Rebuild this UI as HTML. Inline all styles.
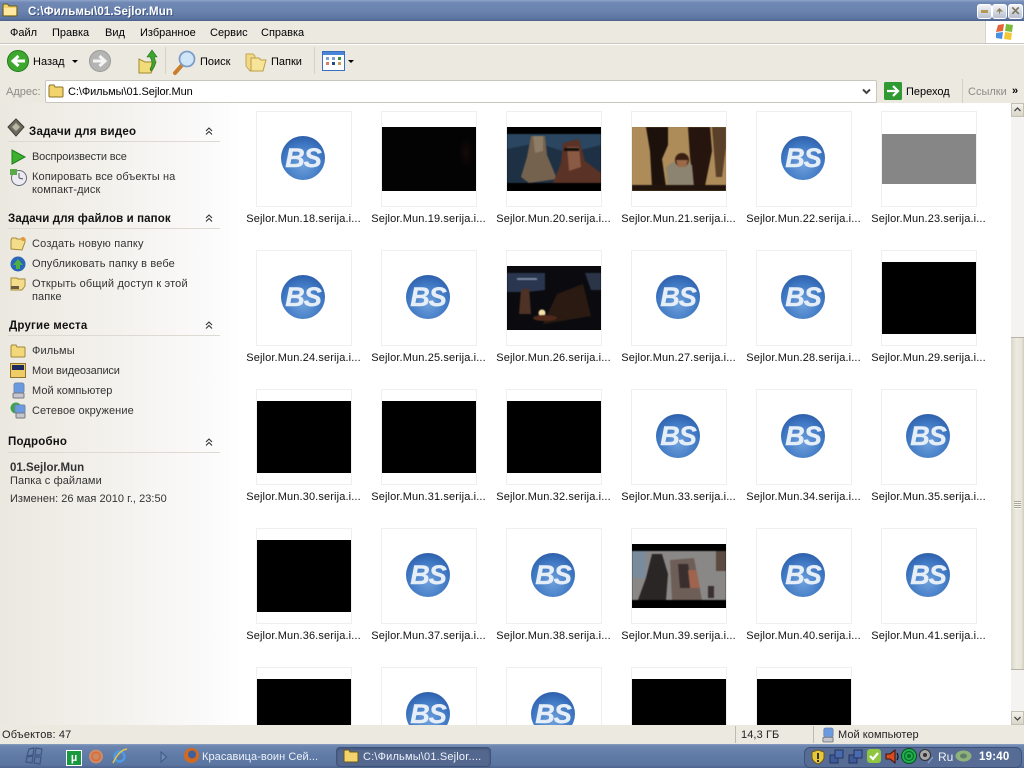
<!DOCTYPE html>
<html><head><meta charset="utf-8">
<style>
html,body{margin:0;padding:0;width:1024px;height:768px;overflow:hidden;background:#ece9e0}
body{font-family:"Liberation Sans","DejaVu Sans",sans-serif;font-size:11px;color:#000;position:relative}
.a,.t{position:absolute}
.t{white-space:nowrap;line-height:13px;margin-top:1px}
.t.g,.t.h{margin-top:2px}
svg{position:absolute;overflow:visible}
#title{left:0;top:0;width:1024px;height:21px;background:linear-gradient(#8ea5c9 0,#7089b4 12%,#6a83ae 55%,#5a73a0 90%,#4a5f88 100%)}
#menu{left:0;top:21px;width:1024px;height:22px;background:#ece9e1;border-bottom:1px solid #c9c6bd}
#tool{left:0;top:44px;width:1024px;height:33px;background:#ece9e1;border-bottom:1px solid #d2cfc6;border-top:1px solid #fff}
#addr{left:0;top:78px;width:1024px;height:25px;background:#ece9e1}
#side{left:0;top:103px;width:241px;height:622px;background:linear-gradient(90deg,#ebe8e0,#f3f1ec 45%,#fbfafa 85%,#fff)}
#view{left:241px;top:103px;width:770px;height:622px;background:#fff;overflow:hidden}
.c{position:absolute;width:94px;height:94px;border:1px solid #efefef;background:#fff}
.c .l{position:absolute;left:-16px;top:101px;width:125px;text-align:center;white-space:nowrap;line-height:13px;letter-spacing:.13px;color:#111}
.k{position:absolute;left:0;width:94px;height:72px;top:11px;background:#000}
.k svg{filter:blur(.6px)}
.b{position:absolute;left:24px;top:24px;width:44px;height:44px;border-radius:50%;background:radial-gradient(circle at 50% 65%,#6ea0dc 0,#3f78c3 55%,#2a5aa6 85%,#24508f 100%);color:#e6eef8;font:italic bold 27px/44px "Liberation Sans",sans-serif;text-align:center;letter-spacing:-1px;overflow:hidden;-webkit-text-stroke:.4px #e6eef8}
.h{font-weight:bold;left:8px;color:#111}
.r{position:absolute;left:8px;width:212px;height:1px;background:#dddad3}
.g{color:#333;left:32px;letter-spacing:.1px}
.sb{position:absolute;left:1011px;background:#f5f3f1;width:13px}
#task{left:0;top:744px;width:1024px;height:24px;background:linear-gradient(#8aa0c2 0,#6c86b0 8%,#5f7aa6 50%,#5c76a2 85%,#4c6590 100%)}
.w{color:#eef2f8}
</style></head><body>

<div class="a" id="title"></div>
<svg style="left:2px;top:2px" width="16" height="15" viewBox="0 0 16 15"><path d="M1 4 L1 13 Q1 14 2 14 H14 Q15 14 15 13 V5 Q15 4 14 4 H7 L5.500 2 H2 Q1 2 1 4Z" fill="#f3d36b" stroke="#6a5a1a"/><path d="M2 6 H14 V13 H2Z" fill="#ffe9a0"/></svg>
<div class="t" style="left:28px;top:5px;color:#fff;font-weight:bold;font-size:11.500px;letter-spacing:.12px;text-shadow:1px 1px 0 #3f5580">C:\Фильмы\01.Sejlor.Mun</div>
<div class="a" style="left:977px;top:4px;width:13px;height:13px;background:linear-gradient(#f4f4f8,#b8bfd0);border:1px solid #fff;border-radius:3px"><div class="a" style="left:3px;top:5px;width:7px;height:3px;background:#b49a50"></div></div>
<div class="a" style="left:992px;top:4px;width:13px;height:13px;background:linear-gradient(#f4f4f8,#b8bfd0);border:1px solid #fff;border-radius:3px"><div class="a" style="left:3px;top:3px;width:7px;height:7px;background:#8a8460;clip-path:polygon(50% 0,100% 50%,60% 50%,50% 100%,40% 50%,0 50%)"></div></div>
<div class="a" style="left:1008px;top:4px;width:13px;height:13px;background:linear-gradient(#f4f4f8,#b8bfd0);border:1px solid #fff;border-radius:3px;color:#7a775f;font:bold 12px/13px 'Liberation Sans';text-align:center">✕</div>

<div class="a" id="menu"></div>
<div class="t" style="left:10px;top:26px">Файл</div>
<div class="t" style="left:52px;top:26px">Правка</div>
<div class="t" style="left:105px;top:26px">Вид</div>
<div class="t" style="left:140px;top:26px">Избранное</div>
<div class="t" style="left:210px;top:26px">Сервис</div>
<div class="t" style="left:261px;top:26px">Справка</div>
<div class="a" style="left:985px;top:21px;width:39px;height:22px;background:#fff;border-left:1px solid #d8d5cc"></div>
<svg style="left:995px;top:23px" width="20" height="18" viewBox="0 0 20 18"><path d="M3 2 L9 1 L8 8 L1 9Z" fill="#e4643a"/><path d="M11 1 L18 2 L17 9 L10 8Z" fill="#7cbb3c"/><path d="M1 10 L8 9 L7 16 L1 15Z" fill="#4a8fe0"/><path d="M10 9 L17 10 L16 17 L9 16Z" fill="#f5c734"/></svg>

<div class="a" id="tool"></div>
<svg style="left:7px;top:50px" width="22" height="22" viewBox="0 0 22 22"><circle cx="11" cy="11" r="10.500" fill="#3ea82e" stroke="#1f7a1c"/><path d="M18 11 H7 M11.500 6 L6 11 L11.500 16" fill="none" stroke="#fff" stroke-width="3"/></svg>
<div class="t" style="left:33px;top:55px">Назад</div>
<div class="a" style="left:72px;top:60px;width:0;height:0;border:3px solid transparent;border-top:3px solid #000;border-bottom:0"></div>
<svg style="left:89px;top:50px" width="22" height="22" viewBox="0 0 22 22"><circle cx="11" cy="11" r="10.500" fill="#b4b4b2" stroke="#999"/><path d="M4 11 H15 M10.500 6 L16 11 L10.500 16" fill="none" stroke="#f4f4f4" stroke-width="3"/></svg>
<svg style="left:137px;top:49px" width="22" height="26" viewBox="0 0 22 26"><path d="M2 10 L2 24 L14 24 L19 13 L8 13 Z" fill="#f2dc7a" stroke="#a08b2c"/><path d="M13 20 Q17 14 13 8 H10 L15 1 L20 8 H17 Q21 15 14 22Z" fill="#3da52e" stroke="#1d6e1a" stroke-width=".6"/></svg>
<div class="a" style="left:165px;top:47px;width:1px;height:27px;background:#d5d2c9"></div>
<svg style="left:172px;top:49px" width="26" height="26" viewBox="0 0 26 26"><path d="M3 24 L11 15" stroke="#c8802f" stroke-width="4" stroke-linecap="round"/><circle cx="15" cy="10" r="7.500" fill="#cfe6f8" stroke="#7f9ec6" stroke-width="1.800"/></svg>
<div class="t" style="left:200px;top:55px">Поиск</div>
<svg style="left:245px;top:51px" width="24" height="22" viewBox="0 0 24 22"><path d="M1 3 H8 L10 5 V14 L5 20 L1 15Z" fill="#f1d98a" stroke="#c3a850"/><path d="M6 7 H14 L16 9 H21 L18 20 H6Z" fill="#f6e498" stroke="#bb9f47"/></svg>
<div class="t" style="left:271px;top:55px">Папки</div>
<div class="a" style="left:314px;top:47px;width:1px;height:27px;background:#d5d2c9"></div>
<svg style="left:322px;top:51px" width="23" height="21" viewBox="0 0 23 21"><rect x=".5" y=".5" width="22" height="19" fill="#fff" stroke="#3a6fc0"/><rect x="1" y="1" width="21" height="3" fill="#4a86d8"/><rect x="4" y="6" width="3" height="3" fill="#7a9fd0"/><rect x="10" y="6" width="3" height="3" fill="#7a9fd0"/><rect x="16" y="6" width="3" height="3" fill="#3f8a4a"/><rect x="4" y="11" width="3" height="3" fill="#d88060"/><rect x="10" y="11" width="3" height="3" fill="#2a4a80"/><rect x="16" y="11" width="3" height="3" fill="#c8a050"/></svg>
<div class="a" style="left:348px;top:60px;width:0;height:0;border:3px solid transparent;border-top:3px solid #000;border-bottom:0"></div>

<div class="a" id="addr"></div>
<div class="t" style="left:6px;top:85px;color:#8d8b83">Адрес:</div>
<div class="a" style="left:45px;top:80px;width:830px;height:21px;background:#fff;border:1px solid #c9c6be;border-radius:2px"></div>
<svg style="left:48px;top:84px" width="16" height="14" viewBox="0 0 16 14"><path d="M1 3 V12 Q1 13 2 13 H14 Q15 13 15 12 V4 Q15 3 14 3 H7 L6 1 H2 Q1 1 1 3Z" fill="#f3d36b" stroke="#8a7424"/></svg>
<div class="t" style="left:68px;top:85px;letter-spacing:-.08px">C:\Фильмы\01.Sejlor.Mun</div>
<svg style="left:861px;top:88px" width="11" height="8" viewBox="0 0 11 8"><path d="M2 1.500 L5.500 5 L9 1.500" fill="none" stroke="#444" stroke-width="2"/></svg>
<svg style="left:884px;top:82px" width="18" height="18" viewBox="0 0 18 18"><rect width="18" height="18" rx="1.500" fill="#2f9a32"/><path d="M3 9 H13 M9 4 L14 9 L9 14" fill="none" stroke="#fff" stroke-width="2.200"/></svg>
<div class="t" style="left:906px;top:85px">Переход</div>
<div class="a" style="left:962px;top:79px;width:1px;height:24px;background:#d2cfc6"></div>
<div class="t" style="left:968px;top:85px;color:#8d8b83">Ссылки</div>
<div class="t" style="left:1012px;top:84px;font-weight:bold;font-size:11px">»</div>

<div class="a" id="side"></div>
<!-- section 1 -->
<svg style="left:7px;top:118px" width="18" height="20" viewBox="0 0 18 20"><path d="M9 1 L17 9 L9 18 L1 9Z" fill="#6c6c60" stroke="#3c3c34"/><path d="M9 5 L13 9 L9 13 L5 9Z" fill="#b8b7a4"/></svg>
<div class="t h" style="left:29px;top:124px;font-size:11.500px;letter-spacing:.25px">Задачи для видео</div>
<svg style="left:204px;top:127px" width="10" height="8" viewBox="0 0 10 8"><path d="M2 4 L5 1 L8 4 M2 7.500 L5 4.500 L8 7.500" fill="none" stroke="#333" stroke-width="1.100"/></svg>
<div class="r" style="top:141px"></div>
<svg style="left:11px;top:149px" width="15" height="16" viewBox="0 0 15 16"><path d="M1 1 L14 8 L1 15Z" fill="#3db030" stroke="#1f7e1c"/></svg>
<div class="t g" style="top:149px;letter-spacing:-.15px">Воспроизвести все</div>
<svg style="left:9px;top:168px" width="18" height="18" viewBox="0 0 18 18"><circle cx="10" cy="10" r="7.500" fill="#eceaf2" stroke="#666a78"/><path d="M10 10 V5 M10 10 L14 11" stroke="#555" /><rect x="1" y="1" width="7" height="6" fill="#5aaa4a"/></svg>
<div class="t g" style="top:169px;line-height:13px">Копировать все объекты на</div>
<div class="t g" style="top:182px">компакт-диск</div>

<div class="t h" style="top:211px;font-size:11.500px;letter-spacing:.12px">Задачи для файлов и папок</div>
<svg style="left:204px;top:214px" width="10" height="8" viewBox="0 0 10 8"><path d="M2 4 L5 1 L8 4 M2 7.500 L5 4.500 L8 7.500" fill="none" stroke="#333" stroke-width="1.100"/></svg>
<div class="r" style="top:228px"></div>
<svg style="left:10px;top:236px" width="16" height="15" viewBox="0 0 16 15"><path d="M1 4 V13 L12 14 L15 6 V3 H7 L6 2 H2Z" fill="#f3dd8a" stroke="#a68a38"/><circle cx="13" cy="3" r="2" fill="#e8963a"/></svg>
<div class="t g" style="top:236px;letter-spacing:.2px">Создать новую папку</div>
<svg style="left:10px;top:256px" width="16" height="16" viewBox="0 0 16 16"><circle cx="8" cy="8" r="7.500" fill="#2a66b8"/><path d="M8 3 L13 9 H10 V13 H6 V9 H3Z" fill="#4cb044"/></svg>
<div class="t g" style="top:256px;letter-spacing:.14px">Опубликовать папку в вебе</div>
<svg style="left:10px;top:276px" width="16" height="15" viewBox="0 0 16 15"><path d="M1 2 H7 L8 3 H15 V10 L12 14 H1Z" fill="#f3dd8a" stroke="#a68a38"/><rect x="1" y="10" width="8" height="3" fill="#6a5a44"/></svg>
<div class="t g" style="top:276px;letter-spacing:.17px">Открыть общий доступ к этой</div>
<div class="t g" style="top:289px">папке</div>

<div class="t h" style="left:9px;top:318px;font-size:11.500px;letter-spacing:.2px">Другие места</div>
<svg style="left:204px;top:321px" width="10" height="8" viewBox="0 0 10 8"><path d="M2 4 L5 1 L8 4 M2 7.500 L5 4.500 L8 7.500" fill="none" stroke="#333" stroke-width="1.100"/></svg>
<div class="r" style="top:335px"></div>
<svg style="left:10px;top:344px" width="16" height="14" viewBox="0 0 16 14"><path d="M1 3 V12 Q1 13 2 13 H14 Q15 13 15 12 V4 Q15 3 14 3 H7 L6 1 H2 Q1 1 1 3Z" fill="#f3d87a" stroke="#a08a38"/></svg>
<div class="t g" style="top:343px">Фильмы</div>
<svg style="left:10px;top:363px" width="16" height="15" viewBox="0 0 16 15"><rect x=".5" y=".5" width="15" height="14" fill="#f0cc66" stroke="#8a7430"/><rect x="2" y="2" width="12" height="5" fill="#1c2a5c"/></svg>
<div class="t g" style="top:363px;letter-spacing:-.15px">Мои видеозаписи</div>
<svg style="left:12px;top:382px" width="13" height="17" viewBox="0 0 13 17"><rect x="2" y="1" width="10" height="10" rx="2" fill="#6a9ae0" stroke="#6f86ae"/><rect x="1" y="11" width="11" height="5" rx="1" fill="#c4c6d0" stroke="#777"/></svg>
<div class="t g" style="top:383px;letter-spacing:.03px">Мой компьютер</div>
<svg style="left:10px;top:402px" width="16" height="17" viewBox="0 0 16 17"><circle cx="6" cy="6" r="5.500" fill="#3fa050"/><rect x="5" y="3" width="10" height="8" rx="1.500" fill="#6a9ae0" stroke="#6f86ae"/><rect x="6" y="11" width="9" height="5" rx="1" fill="#c4c6d0" stroke="#777"/></svg>
<div class="t g" style="top:403px">Сетевое окружение</div>

<div class="t h" style="top:434px;font-size:11.500px;letter-spacing:.2px">Подробно</div>
<svg style="left:204px;top:438px" width="10" height="8" viewBox="0 0 10 8"><path d="M2 4 L5 1 L8 4 M2 7.500 L5 4.500 L8 7.500" fill="none" stroke="#333" stroke-width="1.100"/></svg>
<div class="r" style="top:452px"></div>
<div class="t" style="left:10px;top:461px;font-weight:bold;color:#333;font-size:11.500px">01.Sejlor.Mun</div>
<div class="t g" style="left:10px;top:473px">Папка с файлами</div>
<div class="t g" style="left:10px;top:491px;letter-spacing:.03px">Изменен: 26 мая 2010 г., 23:50</div>

<!-- content -->
<div class="a" id="view">
<div class="c" style="left:15px;top:8px"><div class="b">BS</div><div class="l">Sejlor.Mun.18.serija.i...</div></div>
<div class="c" style="left:140px;top:8px"><div class="k" style="top:15px;height:64px;background:radial-gradient(ellipse 8px 16px at 84px 26px,#160a0a,#040303 90%)"></div><div class="l">Sejlor.Mun.19.serija.i...</div></div>
<div class="c" style="left:265px;top:8px"><div class="k" style="top:15px;height:64px;overflow:hidden"><svg width="94" height="64" style="left:0;top:0"><rect y="7" width="94" height="49" fill="#1e3044"/><path d="M0 7 H94 V18 L62 26 L30 16 L0 22Z" fill="#2a4660"/><path d="M24 9 L38 9 L40 28 L50 52 L22 56 L14 50 L20 30Z" fill="#75624e"/><path d="M26 9 L36 9 L36 24 L28 26Z" fill="#8d7d66"/><path d="M56 16 L72 12 L78 34 L94 46 V56 H46 L54 36Z" fill="#5a3226"/><path d="M60 20 L72 20 L74 40 L62 44Z" fill="#8a5a44"/><rect x="57" y="21" width="15" height="3" fill="#15100c"/></svg></div><div class="l">Sejlor.Mun.20.serija.i...</div></div>
<div class="c" style="left:390px;top:8px"><div class="k" style="top:15px;height:64px;overflow:hidden;background:#9a7848"><svg width="94" height="64" style="left:0;top:0"><rect width="94" height="64" fill="#ad8c5a"/><path d="M14 0 H36 L36 18 L30 32 L34 60 H20 L18 24Z" fill="#1d110b"/><path d="M56 0 H78 L80 24 L72 64 H62 L58 30Z" fill="#26150f"/><path d="M80 0 H94 V20 L90 50 H84Z" fill="#5a4028"/><path d="M34 40 Q48 28 60 38 L62 60 H36Z" fill="#8c8470"/><circle cx="50" cy="33" r="7" fill="#3a1e12"/><path d="M44 33 H56 L54 40 H46Z" fill="#9a6a48"/><rect x="0" y="58" width="94" height="6" fill="#21140c"/></svg></div><div class="l">Sejlor.Mun.21.serija.i...</div></div>
<div class="c" style="left:515px;top:8px"><div class="b">BS</div><div class="l">Sejlor.Mun.22.serija.i...</div></div>
<div class="c" style="left:640px;top:8px"><div class="k" style="top:22px;height:50px;background:#868686"></div><div class="l">Sejlor.Mun.23.serija.i...</div></div>

<div class="c" style="left:15px;top:147px"><div class="b">BS</div><div class="l">Sejlor.Mun.24.serija.i...</div></div>
<div class="c" style="left:140px;top:147px"><div class="b">BS</div><div class="l">Sejlor.Mun.25.serija.i...</div></div>
<div class="c" style="left:265px;top:147px"><div class="k" style="top:15px;height:64px;overflow:hidden"><svg width="94" height="64" style="left:0;top:0"><rect width="94" height="64" fill="#0b0b0f"/><path d="M0 7 H38 V24 L20 26 H0Z" fill="#2a3550"/><path d="M10 12 H30 V14 H10Z" fill="#7a8aa0"/><path d="M78 7 H94 V24 H84Z" fill="#2c3448"/><path d="M14 24 L22 22 L24 48 H12Z" fill="#4e3226"/><path d="M50 28 L76 18 L84 50 L36 58Z" fill="#2a1a12"/><circle cx="35" cy="47" r="3.500" fill="#f4e0a8"/><ellipse cx="38" cy="52" rx="12" ry="3" fill="#50281a"/></svg></div><div class="l">Sejlor.Mun.26.serija.i...</div></div>
<div class="c" style="left:390px;top:147px"><div class="b">BS</div><div class="l">Sejlor.Mun.27.serija.i...</div></div>
<div class="c" style="left:515px;top:147px"><div class="b">BS</div><div class="l">Sejlor.Mun.28.serija.i...</div></div>
<div class="c" style="left:640px;top:147px"><div class="k"></div><div class="l">Sejlor.Mun.29.serija.i...</div></div>

<div class="c" style="left:15px;top:286px"><div class="k"></div><div class="l">Sejlor.Mun.30.serija.i...</div></div>
<div class="c" style="left:140px;top:286px"><div class="k"></div><div class="l">Sejlor.Mun.31.serija.i...</div></div>
<div class="c" style="left:265px;top:286px"><div class="k"></div><div class="l">Sejlor.Mun.32.serija.i...</div></div>
<div class="c" style="left:390px;top:286px"><div class="b">BS</div><div class="l">Sejlor.Mun.33.serija.i...</div></div>
<div class="c" style="left:515px;top:286px"><div class="b">BS</div><div class="l">Sejlor.Mun.34.serija.i...</div></div>
<div class="c" style="left:640px;top:286px"><div class="b">BS</div><div class="l">Sejlor.Mun.35.serija.i...</div></div>

<div class="c" style="left:15px;top:425px"><div class="k"></div><div class="l">Sejlor.Mun.36.serija.i...</div></div>
<div class="c" style="left:140px;top:425px"><div class="b">BS</div><div class="l">Sejlor.Mun.37.serija.i...</div></div>
<div class="c" style="left:265px;top:425px"><div class="b">BS</div><div class="l">Sejlor.Mun.38.serija.i...</div></div>
<div class="c" style="left:390px;top:425px"><div class="k" style="top:15px;height:64px;overflow:hidden"><svg width="94" height="64" style="left:0;top:0"><rect y="7" width="94" height="49" fill="#8a8886"/><path d="M0 7 H14 V34 H0Z" fill="#7a8c9c"/><path d="M20 10 H30 L36 30 L34 56 H6 L14 34Z" fill="#2a2626"/><path d="M38 16 L62 14 L70 56 H40Z" fill="#6e5e58"/><path d="M46 20 L56 20 L60 44 L48 44Z" fill="#3a2e2e"/><path d="M56 26 H64 L68 44 H58Z" fill="#a0634e"/><rect x="84" y="7" width="10" height="20" fill="#5a4a40"/><rect x="76" y="42" width="6" height="12" fill="#3a3030"/></svg></div><div class="l">Sejlor.Mun.39.serija.i...</div></div>
<div class="c" style="left:515px;top:425px"><div class="b">BS</div><div class="l">Sejlor.Mun.40.serija.i...</div></div>
<div class="c" style="left:640px;top:425px"><div class="b">BS</div><div class="l">Sejlor.Mun.41.serija.i...</div></div>

<div class="c" style="left:15px;top:564px"><div class="k"></div></div>
<div class="c" style="left:140px;top:564px"><div class="b">BS</div></div>
<div class="c" style="left:265px;top:564px"><div class="b">BS</div></div>
<div class="c" style="left:390px;top:564px"><div class="k"></div></div>
<div class="c" style="left:515px;top:564px"><div class="k"></div></div>
</div>

<!-- scrollbar -->
<div class="sb" style="top:103px;height:622px"></div>
<div class="sb" style="top:337px;height:333px;background:linear-gradient(90deg,#d8d5c8,#eceadf 40%,#e8e5d8 80%,#cfccbe);border-top:1px solid #b8b5a8;border-bottom:1px solid #b8b5a8;box-sizing:border-box"></div>
<div class="a" style="left:1014px;top:501px;width:7px;height:8px;background:repeating-linear-gradient(#a8a69a 0,#a8a69a 1px,#f6f5ee 1px,#f6f5ee 2px)"></div>
<div class="sb" style="top:103px;height:14px;background:linear-gradient(#f3f1e9,#d8d5c8);border:1px solid #c4c1b4;box-sizing:border-box"></div>
<svg style="left:1014px;top:107px" width="7" height="5" viewBox="0 0 7 5"><path d="M.5 4 L3.500 1 L6.500 4" fill="none" stroke="#444" stroke-width="1.300"/></svg>
<div class="sb" style="top:711px;height:14px;background:linear-gradient(#f3f1e9,#d8d5c8);border:1px solid #c4c1b4;box-sizing:border-box"></div>
<svg style="left:1014px;top:716px" width="7" height="5" viewBox="0 0 7 5"><path d="M.5 1 L3.500 4 L6.500 1" fill="none" stroke="#444" stroke-width="1.300"/></svg>

<!-- status -->
<div class="a" style="left:0;top:725px;width:1024px;height:19px;background:#ece9e1"></div>
<div class="t" style="left:2px;top:728px;letter-spacing:.15px;color:#222">Объектов: 47</div>
<div class="a" style="left:735px;top:726px;width:1px;height:17px;background:#bdbab0"></div>
<div class="t" style="left:741px;top:728px;color:#222;letter-spacing:.1px">14,3 ГБ</div>
<div class="a" style="left:813px;top:726px;width:1px;height:17px;background:#bdbab0"></div>
<svg style="left:822px;top:727px" width="12" height="16" viewBox="0 0 13 17"><rect x="2" y="1" width="10" height="10" rx="2" fill="#6a9ae0" stroke="#6f86ae"/><rect x="1" y="11" width="11" height="5" rx="1" fill="#c4c6d0" stroke="#777"/></svg>
<div class="t" style="left:838px;top:728px;color:#222;letter-spacing:.05px">Мой компьютер</div>

<!-- taskbar -->
<div class="a" id="task"></div>
<svg style="left:25px;top:747px" width="18" height="18" viewBox="0 0 18 18"><path d="M4 2 L9 1 L8 8 L2 9Z M11 1 L17 2 L16 8 L10 8Z M2 10 L8 9 L7 16 L1 15Z M10 10 L16 10 L15 17 L9 16Z" fill="none" stroke="#3f5680" stroke-width="1.200"/></svg>
<div class="a" style="left:66px;top:750px;width:14px;height:14px;border:1px solid #fff;font:bold 11px/14px 'Liberation Sans';text-align:center;background:#1a9a40"><span style="color:#fff">µ</span></div>
<svg style="left:88px;top:748px" width="16" height="17" viewBox="0 0 16 17"><circle cx="8" cy="8.500" r="7" fill="#c98a6a"/><circle cx="8" cy="8.500" r="4" fill="none" stroke="#e06a30" stroke-width="1.500"/></svg>
<svg style="left:111px;top:748px" width="17" height="17" viewBox="0 0 17 17"><circle cx="8.500" cy="8.500" r="5" fill="none" stroke="#4a9ae8" stroke-width="2.500"/><path d="M2 15 Q8 2 16 1" fill="none" stroke="#e8c84a" stroke-width="1.400"/></svg>
<svg style="left:160px;top:751px" width="8" height="12" viewBox="0 0 8 12"><path d="M1 1 L6.500 6 L1 11Z" fill="#6f8ab4" stroke="#3f5a88"/></svg>
<svg style="left:183px;top:747px" width="17" height="17" viewBox="0 0 17 17"><circle cx="8.500" cy="8.500" r="7.500" fill="#d2691e"/><circle cx="9" cy="7.500" r="4" fill="#3e5f9a"/></svg>
<div class="t w" style="left:202px;top:750px;letter-spacing:.06px">Красавица-воин Сей...</div>
<div class="a" style="left:336px;top:747px;width:153px;height:18px;background:#54688f;border:1px solid #3f5278;border-radius:4px;box-shadow:inset 0 1px 2px #3f5278"></div>
<svg style="left:343px;top:749px" width="16" height="14" viewBox="0 0 16 14"><path d="M1 3 V12 Q1 13 2 13 H14 Q15 13 15 12 V4 Q15 3 14 3 H7 L6 1 H2 Q1 1 1 3Z" fill="#f3d36b" stroke="#6a5a1a"/></svg>
<div class="t w" style="left:363px;top:750px;letter-spacing:.18px">C:\Фильмы\01.Sejlor....</div>

<!-- tray -->
<div class="a" style="left:804px;top:747px;width:216px;height:19px;background:#566c94;border:1px solid #3f5278;border-radius:6px"></div>
<svg style="left:811px;top:749px" width="14" height="16" viewBox="0 0 14 16"><path d="M7 1 L13 3 V9 Q12 13 7 15 Q2 13 1 9 V3Z" fill="#e8c838" stroke="#6a5a20"/><rect x="6" y="4" width="2" height="6" fill="#333"/><rect x="6" y="11" width="2" height="2" fill="#333"/></svg>
<svg style="left:829px;top:749px" width="15" height="15" viewBox="0 0 15 15"><rect x="1" y="6" width="8" height="8" fill="#3f5a9a" stroke="#26345c"/><rect x="6" y="1" width="8" height="8" fill="#4a6ab0" stroke="#26345c"/></svg>
<svg style="left:848px;top:749px" width="15" height="15" viewBox="0 0 15 15"><rect x="1" y="6" width="8" height="8" fill="#3f5a9a" stroke="#26345c"/><rect x="6" y="1" width="8" height="8" fill="#4a6ab0" stroke="#26345c"/></svg>
<svg style="left:866px;top:748px" width="16" height="16" viewBox="0 0 16 16"><rect x="1" y="1" width="14" height="14" rx="3" fill="#8ec63f"/><path d="M4 8 L7 11 L12 5" fill="none" stroke="#fff" stroke-width="2.200"/></svg>
<svg style="left:885px;top:749px" width="15" height="15" viewBox="0 0 15 15"><path d="M1 5 H5 L10 1 V14 L5 10 H1Z" fill="#d84a20" stroke="#401208"/><path d="M12 4 Q14 7.500 12 11" fill="none" stroke="#111" stroke-width="1.200"/></svg>
<svg style="left:901px;top:748px" width="16" height="16" viewBox="0 0 16 16"><circle cx="8" cy="8" r="7.500" fill="#1eb04a" stroke="#0c4a20"/><circle cx="8" cy="8" r="4.500" fill="none" stroke="#0c6a2a" stroke-width="1.200"/><circle cx="8" cy="8" r="2" fill="#0c6a2a"/></svg>
<svg style="left:919px;top:748px" width="15" height="16" viewBox="0 0 15 16"><circle cx="6" cy="7" r="5.500" fill="#a8a8a8" stroke="#333"/><circle cx="6" cy="7" r="2" fill="#333"/><path d="M9 15 L14 9" stroke="#8fa8d8"/></svg>
<div class="t w" style="left:938px;top:750px;font-size:12px">Ru</div>
<svg style="left:955px;top:749px" width="17" height="14" viewBox="0 0 17 14"><ellipse cx="8.500" cy="7" rx="8" ry="5.500" fill="#8fb27a"/><ellipse cx="8.500" cy="7" rx="3.500" ry="2.500" fill="#5f7f6a"/></svg>
<div class="t" style="left:979px;top:750px;color:#fff;font-weight:bold;font-size:11.500px;letter-spacing:.2px">19:40</div>

</body></html>
